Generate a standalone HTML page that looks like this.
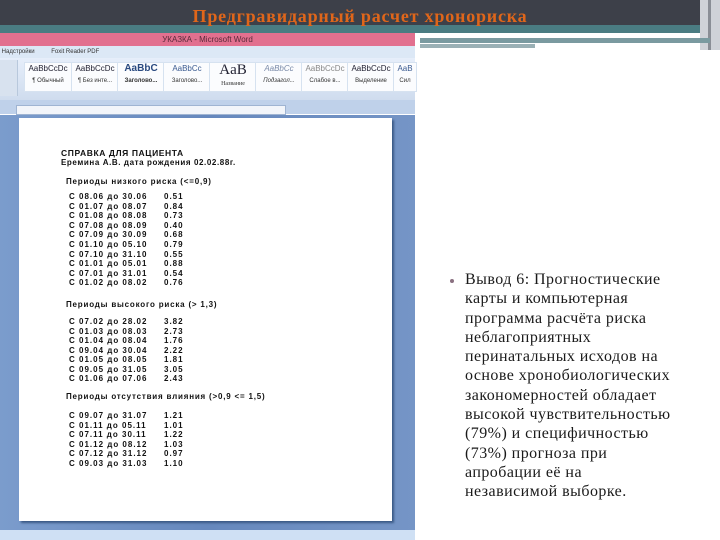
<!DOCTYPE html>
<html><head><meta charset="utf-8"><style>
*{margin:0;padding:0}
body{width:720px;height:540px;position:relative;overflow:hidden;background:#fff;font-family:"Liberation Sans",sans-serif}
.a{position:absolute}
.doc{font-family:"Liberation Sans",sans-serif;font-weight:bold;font-size:8px;color:#111;letter-spacing:1px;white-space:nowrap}
.sty{position:absolute;top:62px;width:46px;height:28px;background:#fbfcfe;border:1px solid #d6e2f0;font-size:8px;color:#223;text-align:center;line-height:12px}
.sty small{display:block;font-size:6px;color:#333}
</style></head><body>
<div class="a" style="left:0;top:0;width:720px;height:25px;background:#3d4049"></div>
<div class="a" style="left:0;top:25px;width:720px;height:8px;background:#4a7c82"></div>
<div class="a" style="left:0;top:0;width:720px;text-align:center;font-family:'Liberation Serif',serif;font-weight:bold;font-size:18px;color:#e0661a;line-height:32px;letter-spacing:.8px">Предгравидарный расчет хронориска</div>
<div class="a" style="left:700px;top:0;width:20px;height:50px;background:#cfd2d8"></div>
<div class="a" style="left:708px;top:0;width:3px;height:50px;background:#8a8e96"></div>
<div class="a" style="left:420px;top:38px;width:290px;height:5px;background:#7a9aa0"></div>
<div class="a" style="left:420px;top:44px;width:115px;height:4px;background:#9ab0b5"></div>
<!-- word -->
<div class="a" style="left:0;top:33px;width:415px;height:13px;background:#e2708f;font-size:8px;color:#5a2a3a;text-align:center;line-height:13px">УКАЗКА - Microsoft Word</div>
<div class="a" style="left:0;top:46px;width:415px;height:12px;background:#dce8f6;font-size:6px;color:#333;line-height:12px">&nbsp;Надстройки &nbsp;&nbsp;&nbsp;&nbsp;&nbsp;&nbsp;&nbsp;&nbsp; Foxit Reader PDF</div>
<div class="a" style="left:0;top:58px;width:415px;height:42px;background:linear-gradient(#e6eefa,#cfdcee)"></div>
<div class="a" style="left:0;top:60px;width:17px;height:36px;background:#d8e2ef;border-right:1px solid #b8c8dc"></div>
<div class="sty" style="left:24px">AaBbCcDc<small>¶ Обычный</small></div>
<div class="sty" style="left:71px">AaBbCcDc<small>¶ Без инте...</small></div>
<div class="sty" style="left:117px;font-size:10px;color:#2a4a80;font-weight:bold">AaBbC<small>Заголово...</small></div>
<div class="sty" style="left:163px;color:#3a5a90">AaBbCc<small>Заголово...</small></div>
<div class="sty" style="left:209px;font-family:'Liberation Serif',serif;font-size:15px;line-height:15px">AaB<small style="line-height:12px">Название</small></div>
<div class="sty" style="left:255px;color:#7a8aa8;font-style:italic">AaBbCc<small>Подзагол...</small></div>
<div class="sty" style="left:301px;color:#888">AaBbCcDc<small>Слабое в...</small></div>
<div class="sty" style="left:347px">AaBbCcDc<small>Выделение</small></div>
<div class="sty" style="left:393px;width:22px;color:#3a5a90">AaB<small>Сил</small></div>
<div class="a" style="left:0;top:100px;width:415px;height:14px;background:#bfd1ea"></div>
<div class="a" style="left:16px;top:105px;width:268px;height:8px;background:#f2f5fa;border:1px solid #9fb4d2"></div>
<div class="a" style="left:0;top:115px;width:415px;height:417px;background:linear-gradient(90deg,#7b9ccc,#6688bd 50%,#7595c6)"></div>
<div class="a" style="left:0;top:530px;width:415px;height:10px;background:#cfe0f4"></div>
<div class="a" style="left:19px;top:118px;width:373px;height:403px;background:#fff;box-shadow:2px 2px 2px #3b5a86"></div>
<div class="a doc" style="left:61px;top:148px;font-size:8.5px;letter-spacing:.6px">СПРАВКА ДЛЯ ПАЦИЕНТА</div>
<div class="a doc" style="left:61px;top:158px;letter-spacing:.6px">Еремина А.В. дата рождения 02.02.88г.</div>
<div class="a doc" style="left:66px;top:177px;letter-spacing:.8px">Периоды низкого риска (&lt;=0,9)</div>
<div class="a doc" style="left:69px;top:192px;line-height:9.6px">С 08.06 до 30.06<br>С 01.07 до 08.07<br>С 01.08 до 08.08<br>С 07.08 до 08.09<br>С 07.09 до 30.09<br>С 01.10 до 05.10<br>С 07.10 до 31.10<br>С 01.01 до 05.01<br>С 07.01 до 31.01<br>С 01.02 до 08.02</div>
<div class="a doc" style="left:164px;top:192px;line-height:9.6px">0.51<br>0.84<br>0.73<br>0.40<br>0.68<br>0.79<br>0.55<br>0.88<br>0.54<br>0.76</div>
<div class="a doc" style="left:66px;top:300px;letter-spacing:.8px">Периоды высокого риска (&gt; 1,3)</div>
<div class="a doc" style="left:69px;top:317px;line-height:9.5px">С 07.02 до 28.02<br>С 01.03 до 08.03<br>С 01.04 до 08.04<br>С 09.04 до 30.04<br>С 01.05 до 08.05<br>С 09.05 до 31.05<br>С 01.06 до 07.06</div>
<div class="a doc" style="left:164px;top:317px;line-height:9.5px">3.82<br>2.73<br>1.76<br>2.22<br>1.81<br>3.05<br>2.43</div>
<div class="a doc" style="left:66px;top:392px;letter-spacing:.8px">Периоды отсутствия влияния (&gt;0,9 &lt;= 1,5)</div>
<div class="a doc" style="left:69px;top:411px;line-height:9.5px">С 09.07 до 31.07<br>С 01.11 до 05.11<br>С 07.11 до 30.11<br>С 01.12 до 08.12<br>С 07.12 до 31.12<br>С 09.03 до 31.03</div>
<div class="a doc" style="left:164px;top:411px;line-height:9.5px">1.21<br>1.01<br>1.22<br>1.03<br>0.97<br>1.10</div>
<!-- right text -->
<div class="a" style="left:450px;top:279px;width:4px;height:4px;border-radius:2px;background:#8a7080"></div>
<div class="a" style="left:465px;top:270px;font-family:'Liberation Serif',serif;font-size:16px;letter-spacing:.45px;line-height:19.3px;color:#1a1a1a;white-space:nowrap">Вывод 6: Прогностические<br>карты и компьютерная<br>программа расчёта риска<br>неблагоприятных<br>перинатальных исходов на<br>основе хронобиологических<br>закономерностей обладает<br>высокой чувствительностью<br>(79%) и специфичностью<br>(73%) прогноза при<br>апробации её на<br>независимой выборке.</div>
</body></html>
